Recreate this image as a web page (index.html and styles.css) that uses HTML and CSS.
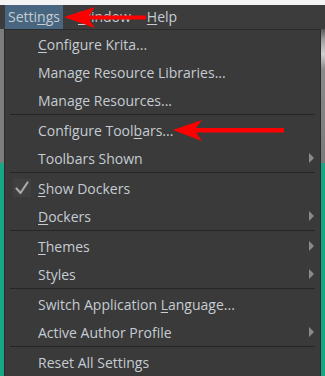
FILE: index.html
```html
<!DOCTYPE html>
<html>
<head>
<meta charset="utf-8">
<link rel="stylesheet" href="styles.css">
</head>
<body>
<div class="screen">
  <div class="topstrip"></div>
  <div class="menubar">
    <span class="mb-item active">Setti<u>n</u>gs</span>
    <span class="mb-item"><u>W</u>indow</span>
    <span class="mb-item"><u>H</u>elp</span>
  </div>
  <div class="workspace">
    <div class="ws-left"><div class="ws-gray"></div><div class="ws-teal"></div></div>
    <div class="ws-mid"></div>
    <div class="ws-right"><div class="ws-gray light"></div><div class="ws-teal"></div></div>
  </div>

  <div class="menu">
    <div class="item"><span class="label"><u>C</u>onfigure Krita...</span></div>
    <div class="item"><span class="label">Manage Resource Libraries...</span></div>
    <div class="item"><span class="label">Manage Resources...</span></div>
    <div class="sep"></div>
    <div class="item"><span class="label">Configure Tool<u>b</u>ars...</span></div>
    <div class="item"><span class="label">Toolbars Shown</span><span class="sub"></span></div>
    <div class="sep"></div>
    <div class="item"><span class="check"><svg width="18" height="18" viewBox="0 0 18 18"><path d="M3.5 9.5 L7.5 14 L14.5 3.5" fill="none" stroke="#a8a8a8" stroke-width="2.2" stroke-linecap="round" stroke-linejoin="round"/></svg></span><span class="label"><u>S</u>how Dockers</span></div>
    <div class="item"><span class="label"><u>D</u>ockers</span><span class="sub"></span></div>
    <div class="sep"></div>
    <div class="item"><span class="label"><u>T</u>hemes</span><span class="sub"></span></div>
    <div class="item"><span class="label">Styles</span><span class="sub"></span></div>
    <div class="sep"></div>
    <div class="item"><span class="label">Switch Application <u>L</u>anguage...</span></div>
    <div class="item"><span class="label">Active Author Profile</span><span class="sub"></span></div>
    <div class="sep"></div>
    <div class="item"><span class="label">Reset All Settings</span></div>
  </div>

  <svg class="annot arrow1" width="90" height="24" viewBox="0 0 90 24">
    <path d="M0 12 L31 2 L25 10.5 L82 10.5 L82 14.5 L25 14.5 L31 23 Z" fill="#f00"/>
  </svg>
  <svg class="annot arrow2" width="115" height="24" viewBox="0 0 115 24">
    <path d="M0 12 L29 2 L23 10 L111 10 L111 14.5 L23 14.5 L29 23 Z" fill="#f00"/>
  </svg>
</div>
</body>
</html>
```

FILE: styles.css
```css
html, body {
  margin: 0;
  padding: 0;
  background: #ffffff;
}
.screen {
  position: relative;
  width: 325px;
  height: 376px;
  overflow: hidden;
  font-family: "Open Sans", "Noto Sans", sans-serif;
  font-size: 14px;
}
.topstrip {
  height: 5px;
  background: #f4f4f4;
}
.menubar {
  height: 24px;
  background: #3c3c3c;
  display: flex;
  align-items: stretch;
  padding-left: 5px;
}
.mb-item {
  color: #c5ccd3;
  padding: 0 3px;
  line-height: 24px;
  margin-right: 10px;
}
.mb-item.active {
  background: #48667f;
  margin-right: 12px;
}
.mb-item u, .label u {
  text-decoration-thickness: 1px;
  text-underline-offset: 2px;
}
.workspace {
  height: 347px;
  display: flex;
}
.ws-left, .ws-right {
  width: 5px;
  display: flex;
  flex-direction: column;
}
.ws-mid {
  flex: 1;
  background: #3a3a3a;
}
.ws-gray {
  height: 134px;
  background: #7d7d7d;
}
.ws-gray.light {
  background: linear-gradient(180deg, #555 0px, #9a9a9a 10px, #d0d0d0 25px, #8a8a8a 40px, #7a7a7a 134px);
}
.ws-teal {
  flex: 1;
  background: #17a784;
}
.menu {
  position: absolute;
  left: 4px;
  top: 29px;
  width: 315px;
  background: #3a3a3a;
  border: 1px solid #2b2b2b;
  border-bottom: none;
  display: flex;
  flex-direction: column;
}
.item {
  height: 28px;
  display: flex;
  align-items: center;
  position: relative;
  color: #c5ccd3;
}
.label {
  margin-left: 33px;
  white-space: nowrap;
}
.check {
  position: absolute;
  left: 8px;
  top: 5px;
  width: 18px;
  height: 18px;
  background: #404040;
  display: flex;
}
.sub {
  position: absolute;
  right: 6px;
  top: 9px;
  width: 0;
  height: 0;
  border-top: 5px solid transparent;
  border-bottom: 5px solid transparent;
  border-left: 5px solid #8a8a8a;
}
.sep {
  height: 2px;
  display: flex;
  padding: 0 5px;
}
.sep::before {
  content: "";
  flex: 1;
  height: 1px;
  background: #262626;
}
.annot {
  position: absolute;
  display: block;
}
.arrow1 {
  left: 64px;
  top: 5px;
}
.arrow2 {
  left: 173px;
  top: 118px;
}
```
